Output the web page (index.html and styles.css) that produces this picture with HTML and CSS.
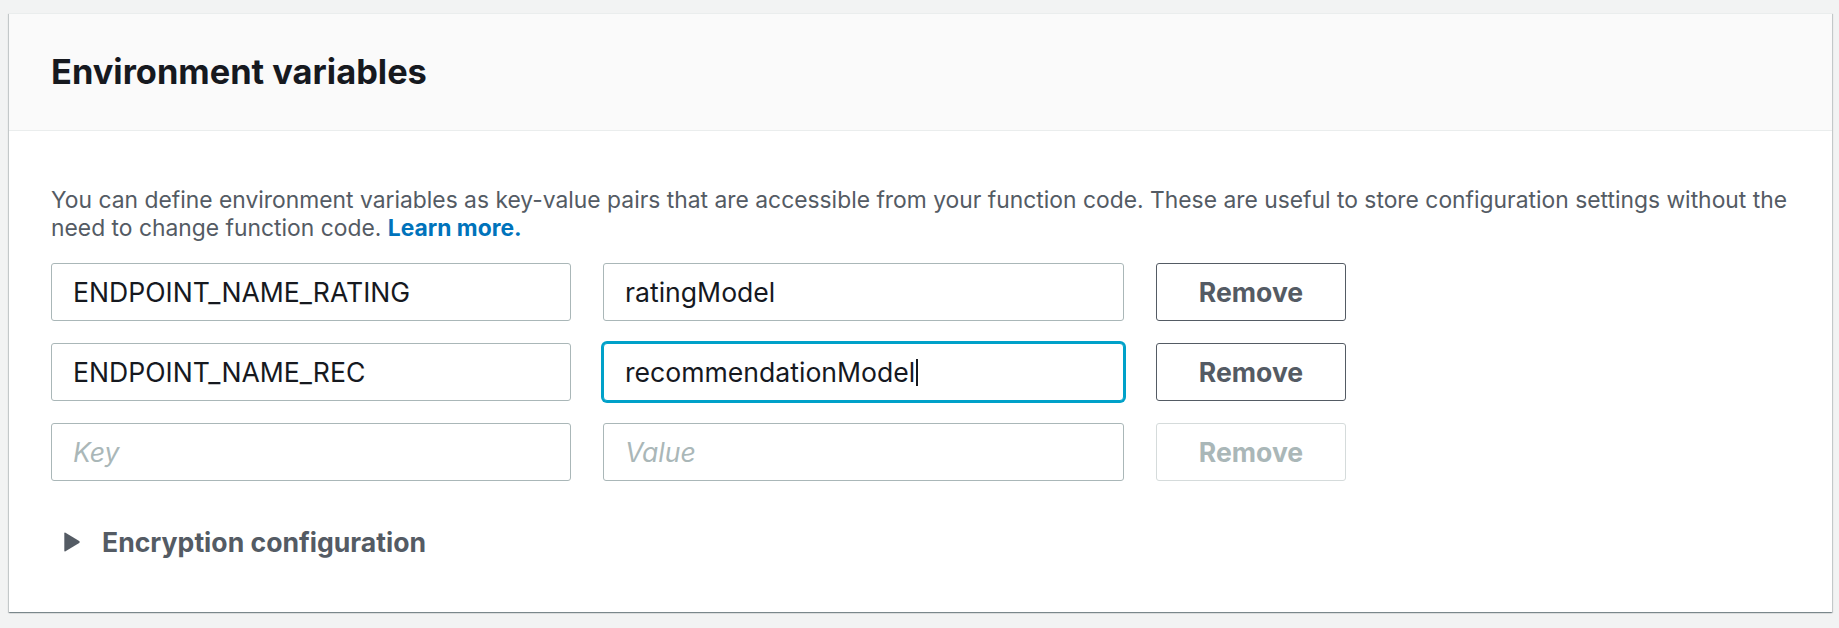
FILE: index.html
```html
<!DOCTYPE html>
<html lang="en">
<head>
<meta charset="utf-8">
<title>Environment variables</title>
<link rel="stylesheet" href="styles.css">
</head>
<body>
<div class="page">
  <section class="card">
    <header class="card-header">
      <h2 class="card-title">Environment variables</h2>
    </header>
    <div class="card-body">
      <p class="desc"><span class="desc-line">You can define environment variables as key-value pairs that are accessible from your function code. These are useful to store configuration settings without the</span><span class="desc-line">need to change function code. <a class="link" href="#">Learn more.</a></span></p>
      <div class="rows">
        <div class="field">ENDPOINT_NAME_RATING</div>
        <div class="field">ratingModel</div>
        <button class="btn" type="button">Remove</button>

        <div class="field">ENDPOINT_NAME_REC</div>
        <div class="field field-focus">recommendationModel<span class="caret"></span></div>
        <button class="btn" type="button">Remove</button>

        <div class="field field-empty">Key</div>
        <div class="field field-empty">Value</div>
        <button class="btn btn-disabled" type="button" disabled>Remove</button>
      </div>
      <div class="expander">
        <svg class="expander-icon" width="16" height="20" viewBox="0 0 16 20" aria-hidden="true"><path d="M1.5 0.8 L15.2 9 Q16.2 10 15.2 11 L1.5 19.2 Q0.3 19.8 0.3 18.4 V1.6 Q0.3 0.2 1.5 0.8 Z" fill="#545b64"/></svg>
        <span class="expander-label">Encryption configuration</span>
      </div>
    </div>
  </section>
</div>
</body>
</html>
```
FILE: styles.css
```css
html, body {
  margin: 0;
  padding: 0;
  background: #f2f3f3;
}

.page {
  padding: 13px 7px 16px 9px;
  font-family: Inter, "Liberation Sans", sans-serif;
}

.card {
  background: #ffffff;
  border-top: 1px solid #eaeded;
  box-shadow: 0 1px 1px 0 rgba(0, 28, 36, 0.3), 1px 1px 1px 0 rgba(0, 28, 36, 0.15), -1px 1px 1px 0 rgba(0, 28, 36, 0.15);
}

.card-header {
  background: #fafafa;
  border-bottom: 1px solid #eaeded;
  padding: 38px 42px 38px 42px;
}

.card-title {
  margin: 0;
  font-size: 34.4px;
  line-height: 40px;
  font-weight: 700;
  color: #16191f;
}

.card-body {
  padding: 55px 40px 55px 42px;
}

.desc {
  margin: 0;
  font-size: 22.85px;
  line-height: 28px;
  color: #545b64;
}

.desc-line {
  display: block;
  height: 28px;
  white-space: nowrap;
}

.link {
  color: #0073bb;
  font-weight: 700;
  text-decoration: none;
}

.rows {
  margin-top: 21px;
  display: grid;
  grid-template-columns: 520px 521px 190px;
  grid-auto-rows: 58px;
  column-gap: 32px;
  row-gap: 22px;
}

.field {
  box-sizing: border-box;
  height: 58px;
  border: 1px solid #aab7b8;
  border-radius: 3px;
  padding: 0 21px;
  display: flex;
  align-items: center;
  font-size: 26.6px;
  color: #16191f;
  background: #ffffff;
  white-space: nowrap;
}

.field-focus {
  border-color: #00a1c9;
  box-shadow: 0 0 0 2px #00a1c9;
  border-radius: 4px;
}

.caret {
  display: inline-block;
  width: 0;
  height: 27px;
  border-left: 2px solid #16191f;
  margin-left: 1px;
}

.field-empty {
  color: #aab7b8;
  font-style: italic;
}

.btn {
  box-sizing: border-box;
  height: 58px;
  margin: 0;
  padding: 0;
  border: 1px solid #545b64;
  border-radius: 3px;
  background: #ffffff;
  font-family: Inter, "Liberation Sans", sans-serif;
  font-size: 26.6px;
  font-weight: 700;
  color: #545b64;
}

.btn-disabled {
  border-color: #d5dbdb;
  color: #aab7b8;
}

.expander {
  margin-top: 46px;
  padding-left: 13px;
  display: flex;
  align-items: center;
  height: 30px;
  gap: 22px;
}

.expander-icon {
  flex: none;
  display: block;
}

.expander-label {
  font-size: 26.6px;
  line-height: 30px;
  font-weight: 700;
  color: #545b64;
}
```
